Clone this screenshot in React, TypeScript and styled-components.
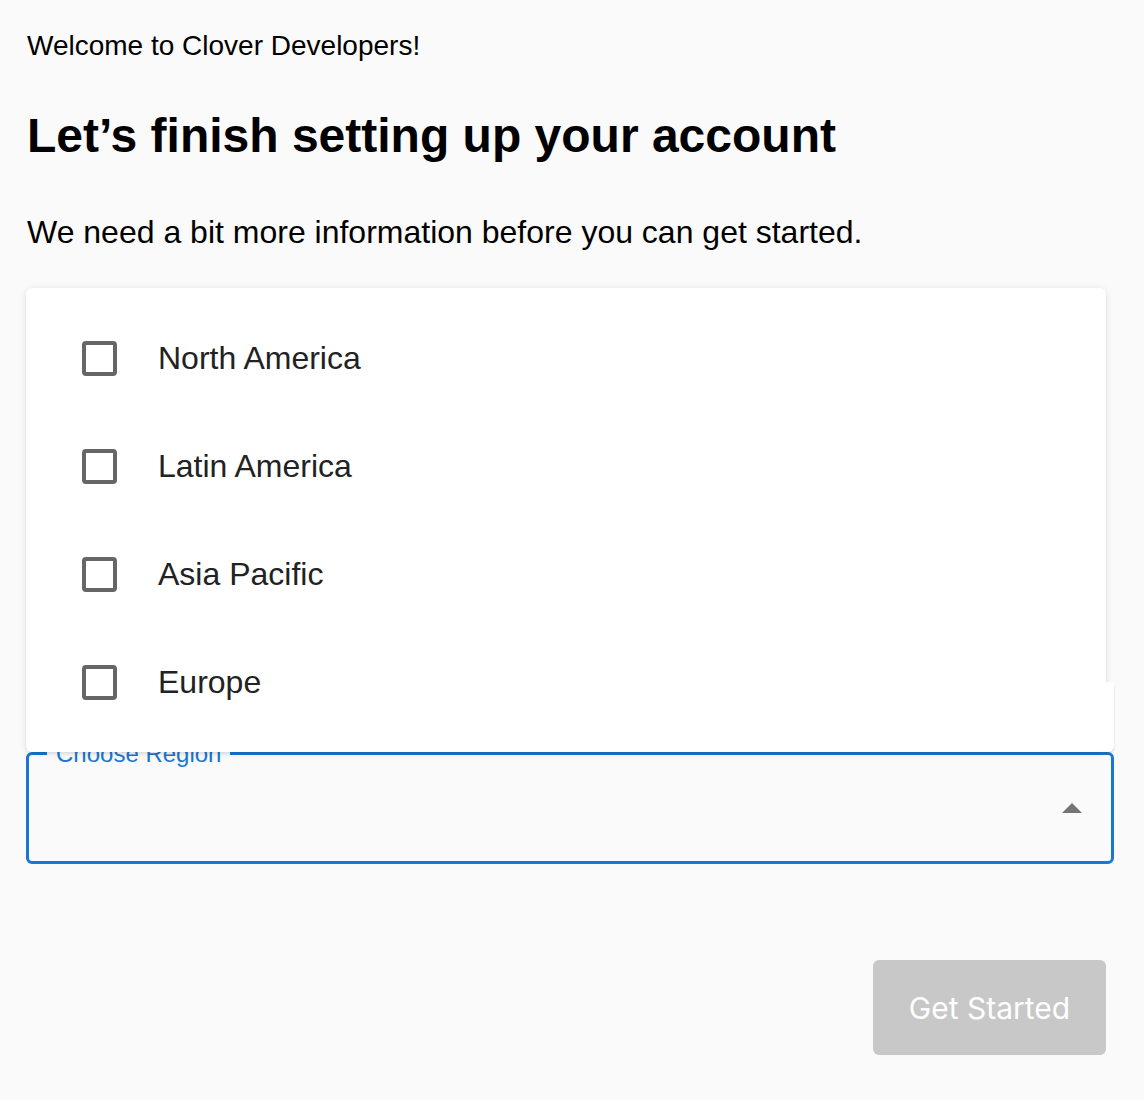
import styled, { createGlobalStyle } from "styled-components"

const GlobalStyle = createGlobalStyle`
  body {
    margin: 0;
    background: #fafafa;
    font-family: "Liberation Sans", Arial, sans-serif;
    color: #000;
  }
`

const Page = styled.div`
  padding: 29px 30px 46px 26px;
`

const Welcome = styled.p`
  margin: 0 0 0 1px;
  font-size: 28px;
  line-height: 34px;
`

const Title = styled.h1`
  margin: 45px 0 0 1px;
  font-size: 48px;
  line-height: 56px;
  font-weight: 700;
`

const Subtitle = styled.p`
  margin: 48px 0 0 1px;
  font-size: 32px;
  line-height: 40px;
`

const Menu = styled.ul`
  position: relative;
  z-index: 2;
  list-style: none;
  margin: 36px 0 0;
  padding: 16px 0;
  width: 1080px;
  background: #fff;
  border-radius: 6px;
  box-shadow: 0 2px 4px -1px rgba(0, 0, 0, 0.12), 0 1px 8px rgba(0, 0, 0, 0.08);

  /* the lower strip of the popover sticks out past the paper */
  &::after {
    content: "";
    position: absolute;
    right: -8px;
    bottom: 0;
    width: 12px;
    height: 70px;
    background: #fff;
    border-radius: 0 0 6px 0;
    box-shadow: 1px 2px 2px -1px rgba(0, 0, 0, 0.15);
  }
`

const Option = styled.li`
  display: flex;
  align-items: center;
  gap: 41px;
  height: 108px;
  padding-left: 56px;
  cursor: pointer;
`

const Box = styled.span`
  box-sizing: border-box;
  width: 35px;
  height: 35px;
  border: 4px solid #666;
  border-radius: 4px;
`

const OptionLabel = styled.span`
  font-size: 32px;
  color: #222;
`

const Select = styled.div`
  position: relative;
  box-sizing: border-box;
  height: 112px;
  border: 3px solid #1976d2;
  border-radius: 6px;
  display: flex;
  align-items: center;
  justify-content: flex-end;
  padding-right: 29px;
`

const Legend = styled.span`
  position: absolute;
  left: 18px;
  top: -16px;
  padding: 0 9px;
  background: #fafafa;
  color: #1976d2;
  font-size: 24px;
  line-height: 30px;
`

const Caret = styled.span`
  width: 0;
  height: 0;
  border-left: 10px solid transparent;
  border-right: 10px solid transparent;
  border-bottom: 10px solid #757575;
`

const Actions = styled.div`
  display: flex;
  justify-content: flex-end;
  margin-top: 96px;
  padding-right: 8px;
`

const Button = styled.button`
  width: 233px;
  height: 95px;
  border: none;
  border-radius: 6px;
  background: #c8c8c8;
  color: #fff;
  font-family: Inter, "Open Sans", sans-serif;
  font-size: 30px;
  cursor: default;
`

const regions = ["North America", "Latin America", "Asia Pacific", "Europe"]

const App = () => {
  return (
    <>
      <GlobalStyle />
      <Page>
        <Welcome>Welcome to Clover Developers!</Welcome>
        <Title>Let’s finish setting up your account</Title>
        <Subtitle>We need a bit more information before you can get started.</Subtitle>

        <Menu>
          {regions.map((r) => (
            <Option key={r}>
              <Box />
              <OptionLabel>{r}</OptionLabel>
            </Option>
          ))}
        </Menu>
        <Select>
          <Legend>Choose Region</Legend>
          <Caret />
        </Select>

        <Actions>
          <Button disabled>Get Started</Button>
        </Actions>
      </Page>
    </>
  )
}

export default App
